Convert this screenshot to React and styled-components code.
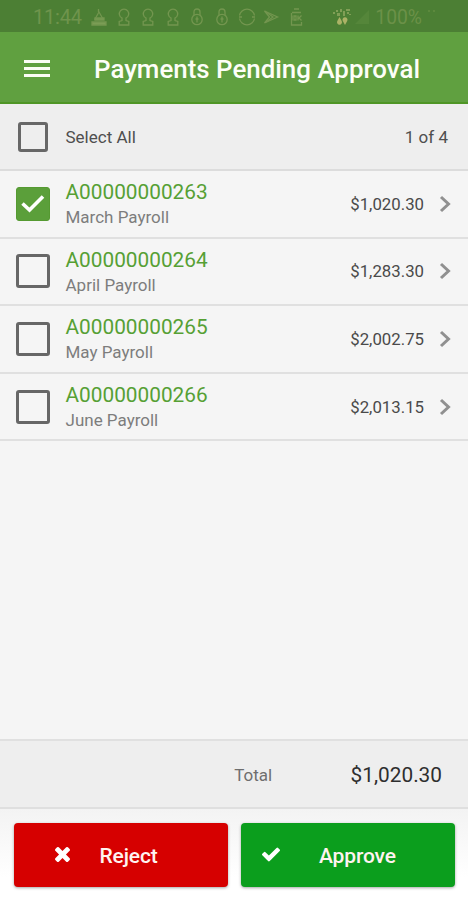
import React, { useState } from 'react';
import styled, { createGlobalStyle } from 'styled-components';

const GlobalStyle = createGlobalStyle`
  * {
    box-sizing: border-box;
  }

  body {
    margin: 0;
    background: #f5f5f5;
    font-family: Roboto, sans-serif;
  }
`;

const Screen = styled.div`
  display: flex;
  flex-direction: column;
  width: 468px;
  height: 900px;
  overflow: hidden;
  background: #f5f5f5;
`;

const StatusBar = styled.div`
  display: flex;
  align-items: center;
  flex: none;
  height: 32px;
  padding: 2px 0 0 33px;
  background: #4c7f34;
  color: #6f944c;
`;

const Clock = styled.span`
  width: 57px;
  font-size: 20px;
  line-height: 24px;
  letter-spacing: -0.2px;
`;

const StatusIcon = styled.svg`
  flex: none;
  width: 18px;
  height: 18px;
  margin-right: 6.6px;
  fill: none;
  stroke: #73964f;
  stroke-width: 1.3;
`;

const Signals = styled.div`
  display: flex;
  align-items: center;
  margin-left: 21px;
`;

const SignalIcon = styled.svg`
  flex: none;
  width: 20px;
  height: 18px;
  fill: ${props => props.$color};
`;

const Battery = styled.span`
  margin-left: 3px;
  padding-top: 2px;
  font-size: 19.3px;
  line-height: 24px;
  color: #6b9148;
`;

const Header = styled.header`
  display: flex;
  align-items: center;
  flex: none;
  height: 72px;
  padding: 2px 24px 0;
  border-bottom: 2px solid #4f9626;
  background: #60a040;
`;

const MenuButton = styled.button`
  display: flex;
  flex-direction: column;
  gap: 4px;
  width: 26px;
  margin: 0 44px 0 0;
  padding: 0;
  border: 0;
  background: none;
`;

const MenuLine = styled.span`
  height: 3px;
  background: #fbfdf5;
`;

const Title = styled.h1`
  margin: 0;
  padding-top: 2px;
  font-size: 25.9px;
  font-weight: 500;
  line-height: 32px;
  white-space: nowrap;
  color: #fdfef8;
`;

const SelectAll = styled.div`
  display: flex;
  align-items: center;
  flex: none;
  height: 67px;
  padding: 0 20px 0 18px;
  border-bottom: 2px solid #dcdcdc;
  background: #eeeeee;
  font-size: 17px;
  color: #4f4f4f;
`;

const SelectAllLabel = styled.span`
  flex: 1;
  margin-left: 17.5px;
`;

const Box = styled.button`
  display: flex;
  align-items: center;
  justify-content: center;
  flex: none;
  width: ${props => props.$size}px;
  height: ${props => props.$size}px;
  padding: 0;
  border: ${props => (props.$checked ? '1px solid #559a31' : '3px solid #676767')};
  border-radius: 3px;
  background: ${props => (props.$checked ? '#5b9f3a' : 'transparent')};
`;

const List = styled.main`
  flex: 1;
`;

const Row = styled.div`
  display: flex;
  align-items: center;
  height: 67.6px;
  padding: 0 16px;
  border-bottom: 2px solid #e0e0e0;
`;

const Details = styled.div`
  flex: 1;
  margin-left: 15.5px;
  padding-top: 2px;
`;

const Account = styled.div`
  font-size: 20.8px;
  line-height: 25px;
  color: #56a034;
`;

const Description = styled.div`
  font-size: 17px;
  line-height: 24px;
  color: #7d7d7d;
`;

const Amount = styled.span`
  font-size: 16.8px;
  color: #4a4a4a;
`;

const Chevron = styled.svg`
  width: 12px;
  height: 18px;
  margin: 0 1px 0 15px;
  fill: none;
  stroke: #909090;
  stroke-width: 3;
`;

const Total = styled.div`
  display: flex;
  align-items: center;
  justify-content: flex-end;
  flex: none;
  height: 70px;
  padding: 2px 26px 0 0;
  border-top: 2px solid #e0e0e0;
  border-bottom: 2px solid #dfdfdf;
  background: #eeeeee;
`;

const TotalLabel = styled.span`
  margin-right: 78.5px;
  font-size: 17px;
  color: #6e6e6e;
`;

const TotalAmount = styled.span`
  font-size: 20.8px;
  color: #2e2e2e;
`;

const Actions = styled.footer`
  display: flex;
  flex: none;
  gap: 13px;
  height: 91px;
  padding: 14px 13px 13px 14px;
  background: linear-gradient(#f3f3f3, #ffffff 75%);
`;

const ActionButton = styled.button`
  display: flex;
  align-items: center;
  flex: none;
  width: 214px;
  padding: 0 0 0 ${props => props.$inset}px;
  border: 0;
  border-radius: 4px;
  background: ${props => props.$color};
  box-shadow: 0 1px 3px rgba(0, 0, 0, 0.35);
  font-family: inherit;
  font-size: 21px;
  font-weight: 500;
  letter-spacing: -0.15px;
  color: #fff3f0;
`;

const ActionLabel = styled.span`
  padding-top: 2px;
`;

const ActionIcon = styled.svg`
  width: ${props => props.$width}px;
  height: 15px;
  margin: 0 ${props => props.$gap}px 1px 0;
  fill: #fff;
`;

const initialPayments = [
  { id: 'A00000000263', name: 'March Payroll', amount: 1020.3, checked: true },
  { id: 'A00000000264', name: 'April Payroll', amount: 1283.3, checked: false },
  { id: 'A00000000265', name: 'May Payroll', amount: 2002.75, checked: false },
  { id: 'A00000000266', name: 'June Payroll', amount: 2013.15, checked: false },
];

const formatAmount = value =>
  '$' + value.toLocaleString('en-US', { minimumFractionDigits: 2 });

const Checkbox = ({ checked, size = 34, onClick, label }) => (
  <Box
    role="checkbox"
    aria-checked={checked}
    aria-label={label}
    $checked={checked}
    $size={size}
    onClick={onClick}
  >
    {checked && (
      <svg width="24" height="20" viewBox="0 0 24 20">
        <path d="M1.5 9.5l7 6.5L22 2.5" fill="none" stroke="#fff" strokeWidth="3.6" />
      </svg>
    )}
  </Box>
);

const Keyhole = () => (
  <StatusIcon viewBox="0 0 18 18">
    <path d="M7 10a4.7 4.7 0 1 1 4 0v2.5l2.8 1V17H4.2v-3.5l2.8-1z" />
  </StatusIcon>
);

const Lock = () => (
  <StatusIcon viewBox="0 0 18 18">
    <path d="M6 7V4q0-3 3-3t3 3v3" />
    <circle cx="9" cy="11.5" r="5.2" />
    <path d="M9 8.5v6M7.5 11h3" />
  </StatusIcon>
);

const StatusIcons = () => (
  <>
    <StatusIcon viewBox="0 0 18 18">
      <path d="M8.5 1v3M9 4l4 7H5z" />
      <path d="M5 10h9v2H5zM2 14h14v3H2z" fill="#7b9d55" />
    </StatusIcon>
    <Keyhole />
    <Keyhole />
    <Keyhole />
    <Lock />
    <Lock />
    <StatusIcon viewBox="0 0 18 18">
      <path d="M1.5 7.500a7.600 7.600 0 0 1 15 0M1.500 10.500a7.600 7.600 0 0 0 15 0" />
      <path d="M1 9h3M14 9h3" />
    </StatusIcon>
    <StatusIcon viewBox="0 0 18 18">
      <path d="M2.5 3L15.5 9l-13 6L7.5 9z" />
      <path d="M4 4l7 5-7 5" />
    </StatusIcon>
    <StatusIcon viewBox="0 0 18 18">
      <path d="M7 1h5M5 4.5h9M4.5 5v12h10v-3" />
      <path d="M5 7.5v5M7 8v4h2V8zM11 7.5v5M14.5 7.5L12 10l2.5 2.5" />
    </StatusIcon>
  </>
);

const App = () => {
  const [payments, setPayments] = useState(initialPayments);
  const selected = payments.filter(payment => payment.checked);
  const allSelected = selected.length === payments.length;
  const total = selected.reduce((sum, payment) => sum + payment.amount, 0);

  const toggle = id =>
    setPayments(
      payments.map(payment =>
        payment.id === id ? { ...payment, checked: !payment.checked } : payment
      )
    );

  const toggleAll = () =>
    setPayments(payments.map(payment => ({ ...payment, checked: !allSelected })));

  return (
    <Screen>
      <GlobalStyle />
      <StatusBar>
        <Clock>11:44</Clock>
        <StatusIcons />
        <Signals>
          <SignalIcon viewBox="0 0 20 18" $color="#809f56">
            <path d="M1 4h2v2H1zM4 2h2v2H4zM5 5h3v3H5zM8 1h2v3H8zM11 3h2v5h-2zM14 1h4v2h-4zM15 4h2v2h-2zM17 6h2v1h-2z" />
            <path d="M7.5 9l2.2 4a2.5 2.5 0 1 1-4.4 0zM13 17l-2.2-4a2.5 2.5 0 1 1 4.4 0z" fill="#abb266" />
          </SignalIcon>
          <SignalIcon viewBox="0 0 20 18" $color="#55863a">
            <path d="M3 16L17 2v14z" />
          </SignalIcon>
          <Battery>100%</Battery>
          <SignalIcon viewBox="0 0 20 18" $color="#5c893d">
            <path d="M6 2h2v2H6zM11 2h2v2h-2z" />
          </SignalIcon>
        </Signals>
      </StatusBar>
      <Header>
        <MenuButton aria-label="Menu">
          <MenuLine />
          <MenuLine />
          <MenuLine />
        </MenuButton>
        <Title>Payments Pending Approval</Title>
      </Header>
      <SelectAll>
        <Checkbox size={30} checked={allSelected} onClick={toggleAll} label="Select All" />
        <SelectAllLabel>Select All</SelectAllLabel>
        <span>
          {selected.length} of {payments.length}
        </span>
      </SelectAll>
      <List>
        {payments.map(payment => (
          <Row key={payment.id}>
            <Checkbox
              checked={payment.checked}
              onClick={() => toggle(payment.id)}
              label={payment.name}
            />
            <Details>
              <Account>{payment.id}</Account>
              <Description>{payment.name}</Description>
            </Details>
            <Amount>{formatAmount(payment.amount)}</Amount>
            <Chevron viewBox="0 0 12 18">
              <path d="M2 2l7.5 7L2 16" />
            </Chevron>
          </Row>
        ))}
      </List>
      <Total>
        <TotalLabel>Total</TotalLabel>
        <TotalAmount>{formatAmount(total)}</TotalAmount>
      </Total>
      <Actions>
        <ActionButton $color="#d60000" $inset={41}>
          <ActionIcon viewBox="110 366 1188 1188" $width={15} $gap={29.5}>
            <path d="M1298 1322q0 40-28 68l-136 136q-28 28-68 28t-68-28l-294-294-294 294q-28 28-68 28t-68-28l-136-136q-28-28-28-68t28-68l294-294-294-294q-28-28-28-68t28-68l136-136q28-28 68-28t68 28l294 294 294-294q28-28 68-28t68 28l136 136q28 28 28 68t-28 68l-294 294 294 294q28 28 28 68z" />
          </ActionIcon>
          <ActionLabel>Reject</ActionLabel>
        </ActionButton>
        <ActionButton $color="#0b9e1d" $inset={21}>
          <ActionIcon viewBox="121 334 1550 1188" $width={18} $gap={39}>
            <path d="M1671 566q0 40-28 68l-724 724-136 136q-28 28-68 28t-68-28l-136-136-362-362q-28-28-28-68t28-68l136-136q28-28 68-28t68 28l294 295 656-657q28-28 68-28t68 28l136 136q28 28 28 68z" />
          </ActionIcon>
          <ActionLabel>Approve</ActionLabel>
        </ActionButton>
      </Actions>
    </Screen>
  );
};

export default App;
